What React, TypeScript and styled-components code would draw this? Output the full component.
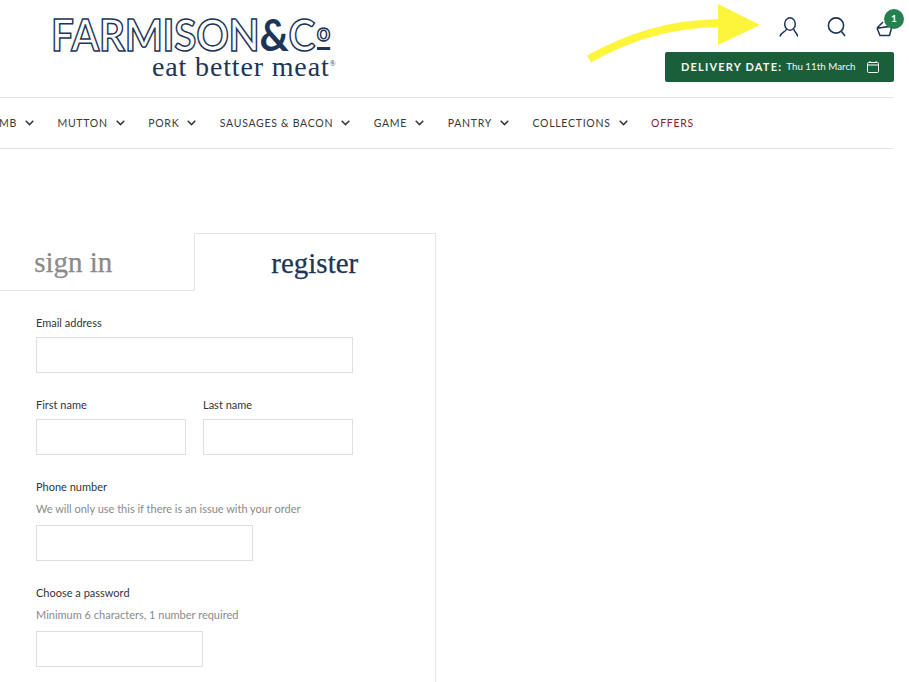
import React from "react";
import styled, { createGlobalStyle } from "styled-components";

const GlobalStyle = createGlobalStyle`
  html, body {
    margin: 0;
    padding: 0;
    height: 682px;
    overflow: hidden;
    background: #fff;
    font-family: "Lato", "Open Sans", sans-serif;
  }
`;

const Page = styled.div`
  position: relative;
  width: 909px;
  height: 682px;
  overflow: hidden;
`;

const Header = styled.header`
  width: 894px;
  height: 98px;
  box-sizing: border-box;
  border-bottom: 1px solid #e4e4e4;
  display: flex;
  justify-content: space-between;
`;

const Logo = styled.div`
  padding: 12px 0 0 51px;
  display: flex;
  flex-direction: column;
  color: #1d3557;
`;

const LogoTop = styled.div`
  display: flex;
  align-items: flex-start;
  font-family: "Lato", sans-serif;
  font-weight: 700;
  font-size: 43px;
  line-height: 46px;
  letter-spacing: -0.3px;
  color: #fff;
  -webkit-text-stroke: 1.5px #1d3557;
  white-space: nowrap;
  transform: scaleX(0.94);
  transform-origin: left top;
`;

const Amp = styled.span`
  color: #1d3557;
  -webkit-text-stroke: 0;
`;

const SmallO = styled.span`
  display: block;
  font-size: 25px;
  line-height: 22px;
  margin: 8px 0 0 2px;
  letter-spacing: 0;
  height: 27px;
  border-bottom: 3px solid #1d3557;
`;

const LogoTag = styled.div`
  font-family: "Liberation Serif", serif;
  font-size: 28px;
  line-height: 17px;
  letter-spacing: 0.85px;
  white-space: nowrap;
  margin-left: 101px;

  sup {
    font-size: 8px;
    line-height: 0;
  }
`;

const HeaderRight = styled.div`
  display: flex;
  flex-direction: column;
  align-items: flex-end;
`;

const IconRow = styled.div`
  display: flex;
  align-items: center;
  gap: 28px;
  height: 52px;
`;

const IconBox = styled.span`
  position: relative;
  display: block;
  width: 20px;
  height: 20px;
  margin-top: 2px;
`;

const CartBadge = styled.span`
  position: absolute;
  top: -8px;
  left: 10px;
  width: 20px;
  height: 20px;
  border-radius: 50%;
  background: #267f50;
  color: #fff;
  font-size: 10px;
  font-weight: 700;
  line-height: 19px;
  text-align: center;
`;

const DeliveryButton = styled.button`
  width: 229px;
  height: 30px;
  border: 0;
  border-radius: 2px;
  background: #1a5f39;
  color: #f2f7f4;
  display: flex;
  align-items: center;
  padding: 0 15px 2px 16px;
  font-family: inherit;
  font-size: 9.8px;
  letter-spacing: 0;
  white-space: nowrap;
`;

const DeliveryLabel = styled.strong`
  font-weight: 700;
  font-size: 11px;
  letter-spacing: 1.2px;
  margin-right: 4px;
`;

const CalendarIcon = styled.svg`
  margin-left: auto;
  margin-top: 2px;
`;

const Nav = styled.nav`
  width: 894px;
  height: 51px;
  box-sizing: border-box;
  border-bottom: 1px solid #e4e4e4;
  padding-bottom: 1px;
  display: flex;
  align-items: center;
  gap: 23.5px;
  overflow: hidden;
`;

const NavItem = styled.a<{ $offer?: boolean; $cut?: boolean }>`
  display: flex;
  align-items: center;
  gap: 8px;
  flex-shrink: 0;
  font-size: 10.5px;
  letter-spacing: 0.72px;
  color: ${(props) => (props.$offer ? "#84242c" : "#38383c")};
  margin-left: ${(props) => (props.$cut ? "-15px" : "0")};
`;

const FormPanel = styled.section`
  width: 483px;
  margin: 84px 0 0 -47px;
  box-sizing: border-box;
  border-right: 1px solid #e4e4e4;
`;

const Tabs = styled.div`
  display: flex;
  height: 58px;
`;

const Tab = styled.div<{ $active?: boolean }>`
  flex: 1;
  box-sizing: border-box;
  text-align: center;
  font-family: "Liberation Serif", serif;
  font-size: 29px;
  line-height: 58px;
  -webkit-text-stroke: 0.25px currentColor;
  color: ${(props) => (props.$active ? "#1d3557" : "#8a8a8a")};
  border-top: ${(props) => (props.$active ? "1px solid #e4e4e4" : "0")};
  border-left: ${(props) => (props.$active ? "1px solid #e4e4e4" : "0")};
  border-bottom: ${(props) => (props.$active ? "0" : "1px solid #e4e4e4")};
`;

const Form = styled.form`
  padding: 24px 0 40px 83px;
  display: flex;
  flex-direction: column;
  gap: 24px;
`;

const FieldRow = styled.div`
  display: flex;
  gap: 17px;
`;

const Field = styled.div`
  display: flex;
  flex-direction: column;
`;

const Label = styled.label`
  font-size: 11px;
  line-height: 16px;
  color: #333338;
  margin-bottom: 6px;
`;

const Hint = styled.span`
  font-size: 11px;
  line-height: 16px;
  color: #8a8a8a;
  margin-bottom: 8px;
`;

const Input = styled.input<{ $width: number }>`
  width: ${(props) => props.$width}px;
  height: 36px;
  box-sizing: border-box;
  border: 1px solid #dfdfdf;
  background: #fff;
  outline: none;
`;

const ArrowOverlay = styled.svg`
  position: absolute;
  left: 580px;
  top: 0;
  pointer-events: none;
`;

const Chevron = () => (
  <svg width="9" height="6" viewBox="0 0 9 6" fill="none" stroke="#38383c" strokeWidth="1.5">
    <path d="M.7.8l3.8 3.8L8.3.8" />
  </svg>
);

const navLinks = ["LAMB", "MUTTON", "PORK", "SAUSAGES & BACON", "GAME", "PANTRY", "COLLECTIONS"];

export default function App() {
  return (
    <Page>
      <GlobalStyle />
      <Header>
        <Logo>
          <LogoTop>
            FARMISON<Amp>&amp;</Amp>C<SmallO>o</SmallO>
          </LogoTop>
          <LogoTag>
            eat better meat<sup>®</sup>
          </LogoTag>
        </Logo>
        <HeaderRight>
          <IconRow>
            <IconBox>
              <svg width="20" height="20" viewBox="0 0 20 20" fill="none" stroke="#1d3557" strokeWidth="1.5">
                <ellipse cx="12" cy="7" rx="5.3" ry="6.2" />
                <path d="M8.5 12C8 15 3 15 2 19.5M15.8 12c.2 3 3 3.5 4 7.5" />
              </svg>
            </IconBox>
            <IconBox>
              <svg width="20" height="20" viewBox="0 0 20 20" fill="none" stroke="#1d3557" strokeWidth="1.6">
                <circle cx="10" cy="8.5" r="7.6" />
                <path d="M15.5 14.5l3.5 4.5" />
              </svg>
            </IconBox>
            <IconBox>
              <svg width="20" height="20" viewBox="0 0 20 20" fill="none" stroke="#1d3557" strokeWidth="1.5">
                <path d="M3 11l3 7.5h9.5L18 9M3 11c3 0 9-1 15-2M3 11l6-6" />
              </svg>
              <CartBadge>1</CartBadge>
            </IconBox>
          </IconRow>
          <DeliveryButton type="button">
            <DeliveryLabel>DELIVERY DATE:</DeliveryLabel> Thu 11th March
            <CalendarIcon width="12" height="12" viewBox="0 0 12 12" fill="none" stroke="#fff" strokeWidth="1">
              <rect x=".5" y="1.5" width="11" height="10" rx="1" />
              <path d="M.5 4h11M3 0v2M9 0v2" />
            </CalendarIcon>
          </DeliveryButton>
        </HeaderRight>
      </Header>
      <Nav>
        {navLinks.map((link, i) => (
          <NavItem key={link} $cut={i === 0}>
            {link}
            <Chevron />
          </NavItem>
        ))}
        <NavItem $offer>OFFERS</NavItem>
      </Nav>
      <FormPanel>
        <Tabs>
          <Tab>sign in</Tab>
          <Tab $active>register</Tab>
        </Tabs>
        <Form>
          <Field>
            <Label>Email address</Label>
            <Input $width={317} />
          </Field>
          <FieldRow>
            <Field>
              <Label>First name</Label>
              <Input $width={150} />
            </Field>
            <Field>
              <Label>Last name</Label>
              <Input $width={150} />
            </Field>
          </FieldRow>
          <Field>
            <Label>Phone number</Label>
            <Hint>We will only use this if there is an issue with your order</Hint>
            <Input $width={217} />
          </Field>
          <Field>
            <Label>Choose a password</Label>
            <Hint>Minimum 6 characters, 1 number required</Hint>
            <Input $width={167} />
          </Field>
        </Form>
      </FormPanel>
      <ArrowOverlay width="190" height="70" viewBox="0 0 190 70">
        <path d="M9 59C50 36 90 24 140 23" fill="none" stroke="#fcf53a" strokeWidth="8" />
        <path d="M138 4l42 21-42 20z" fill="#fcf53a" />
      </ArrowOverlay>
    </Page>
  );
}
